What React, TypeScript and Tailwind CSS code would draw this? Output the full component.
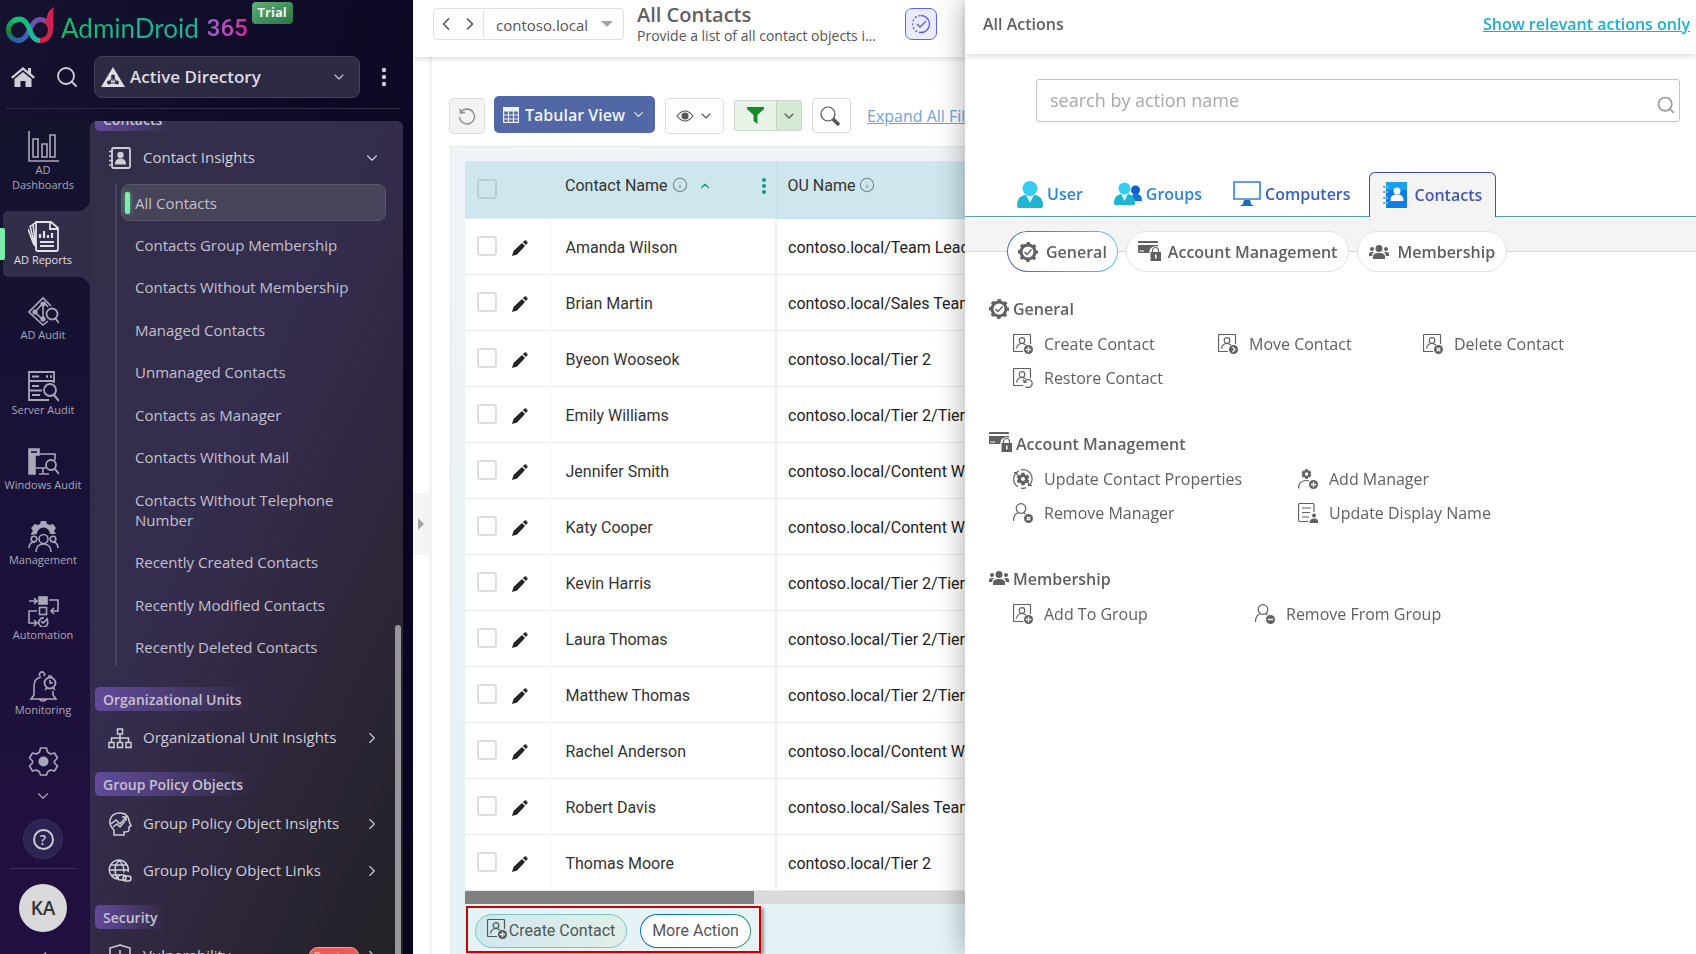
import type { ReactNode } from "react";
import { ChevronDown, ChevronLeft, ChevronRight, ChevronUp, EllipsisVertical, Info, Search } from "lucide-react";

type IconProps = { className?: string };

function Logo() {
  return (
    <svg viewBox="0 0 50 38" className="h-[38px] w-[50px]" fill="none" strokeWidth="5">
      <defs>
        <linearGradient id="ringLeft" x1="0" y1="0" x2="0" y2="1">
          <stop offset="0" stopColor="#16b868" />
          <stop offset="0.6" stopColor="#1c7f3a" />
          <stop offset="1" stopColor="#2b62ad" />
        </linearGradient>
        <linearGradient id="ringCross" x1="0" y1="1" x2="1" y2="0">
          <stop offset="0" stopColor="#2b62ad" />
          <stop offset="0.5" stopColor="#4d62b0" />
          <stop offset="1" stopColor="#7a4aa8" />
        </linearGradient>
        <linearGradient id="ringRight" x1="0" y1="0" x2="0" y2="1">
          <stop offset="0" stopColor="#7a4aa8" />
          <stop offset="0.4" stopColor="#c02a5c" />
          <stop offset="1" stopColor="#d81f3c" />
        </linearGradient>
        <linearGradient id="ringBand" x1="0" y1="0" x2="1" y2="1">
          <stop offset="0" stopColor="#16c070" />
          <stop offset="1" stopColor="#1cb8a8" />
        </linearGradient>
      </defs>
      <path d="M14 34.500A10.500 10.500 0 0 1 14 13.500" stroke="url(#ringLeft)" />
      <path d="M13.500 34.500C25 34.500 24 13.500 35.500 13.500" stroke="url(#ringCross)" />
      <path d="M35 13.500a10.500 10.500 0 0 1 0 21" stroke="url(#ringRight)" />
      <path d="M8 15C20 8 24 22 26 27c2 5 5 7.500 9 7.500" stroke="url(#ringBand)" />
      <path d="M40 17C43 13 40 6 49 1c-2 7 0 12-.5 20-.5 5-3.500 4-4.500 2-.5-2-2-4-4-6Z" fill="#d0204f" stroke="none" />
    </svg>
  );
}

function HomeIcon() {
  return (
    <svg viewBox="0 0 24 20" className="h-5 w-6" fill="currentColor">
      <path d="M12 0 0 10l1.500 1.700L12 3l10.500 8.700L24 10l-4-3.400V1h-3v3.200Z" />
      <path d="m12 5-8.500 7v8h6v-6h5v6h6v-8Z" />
    </svg>
  );
}

function DirectoryIcon() {
  return (
    <svg viewBox="0 0 24 20" className="h-5 w-6">
      <path d="M12 0 24 20H0Z" fill="#dddbe3" />
      <path d="M12 9v5m-3.500 2h7M12 10l-4 6m4-6 4 6" stroke="#322f4a" strokeWidth="1.200" />
      <circle cx="12" cy="9.500" r="2" fill="#322f4a" />
      <circle cx="8" cy="15.500" r="2" fill="#322f4a" />
      <circle cx="16" cy="15.500" r="2" fill="#322f4a" />
    </svg>
  );
}

function RailIcon({ children }: { children: ReactNode }) {
  return (
    <svg viewBox="0 0 31 31" className="h-[31px] w-[31px] shrink-0" fill="none" stroke="currentColor" strokeWidth="1.600">
      {children}
    </svg>
  );
}

const dashboardIcon = (
  <RailIcon>
    <path d="M1 0v30h30M5 8h5v18H5ZM14 13h5v13h-5ZM22 4h5v22h-5Z" />
  </RailIcon>
);
const reportsIcon = (
  <RailIcon>
    <path d="M8 1h15l7 6v21q0 2-2 2H10q-2 0-2-2ZM22 1v7h8M12 25h14M12 21h14" strokeWidth="1.800" />
    <path d="M12 17v-4M16 17v-7M20 17v-3M24 17v-5" strokeWidth="2.200" />
    <path d="m5 3 3 24M2 5l5 20M5 3l3-1M2 5l3-1M0 8l6 16" />
  </RailIcon>
);
const adAuditIcon = (
  <RailIcon>
    <path d="M23 10 15 2 1 16l14 13 5-4M15 6v19M15 7l-8 9 8 8M16 6l4 5" />
    <circle cx="24" cy="18" r="5.500" strokeWidth="1.800" />
    <path d="m27 22 4 5" strokeWidth="2" />
    <circle cx="15" cy="8" r="1.800" fill="currentColor" />
    <circle cx="7" cy="16" r="1.800" fill="currentColor" />
    <circle cx="15" cy="23" r="1.800" fill="currentColor" />
  </RailIcon>
);
const serverAuditIcon = (
  <RailIcon>
    <path d="M26 12V1H1v28h20M1 10h25M4 5.500h7M4 15h7M1 19.500h13M4 24h8" strokeWidth="1.800" />
    <path d="M18 5.500h2M22 5.500h2" strokeWidth="2.400" />
    <circle cx="22" cy="19" r="6" strokeWidth="1.800" />
    <path d="m26 24 5 6" strokeWidth="2" />
  </RailIcon>
);
const windowsAuditIcon = (
  <RailIcon>
    <path d="M1 3h10v6H7v19H1Z" fill="currentColor" />
    <path d="M3 6h6" stroke="#15122f" />
    <path d="M11 8h16v6M8 22h10M15 22v5M11 28h10" />
    <circle cx="23" cy="19" r="5" strokeWidth="1.800" />
    <path d="m27 23 4 5" strokeWidth="2" />
  </RailIcon>
);
const managementIcon = (
  <RailIcon>
    <path
      d="M3 14c0-2 1-3 2-4L3 7l4-4 3 1 2-1 1-3h5l1 3 3 1 3-1 3 4-2 3 2 3h-6a6.500 6.500 0 0 0-13 0Z"
      fill="currentColor"
      stroke="none"
    />
    <circle cx="15.500" cy="18" r="4.500" />
    <circle cx="6" cy="18" r="2.800" />
    <circle cx="25" cy="18" r="2.800" />
    <path d="M8 31c0-5 3-8 7.500-8s7.500 3 7.500 8M1 27c0-4 2-6 6-6M30 27c0-4-2-6-6-6" />
  </RailIcon>
);
const automationIcon = (
  <RailIcon>
    <rect x="11" y="1" width="8" height="7" fill="currentColor" />
    <rect x="11.500" y="11.500" width="7" height="7" />
    <path d="M1 5h7M6 2l3 3-3 3M21 4h9v11h-7M26 12l-3 3 3 3M9 15H1v12h7M6 24l3 3-3 3" />
    <path d="M19 24a4.500 4.500 0 1 1-3-2M13 25l2 2 5-5" />
  </RailIcon>
);
const monitoringIcon = (
  <RailIcon>
    <path d="M25 20v4l3 4H3l3-4V15c0-5 3-8 7-9M12 5a2.500 2.500 0 1 1 4 0M11 28q4 4 8 0" />
    <circle cx="22" cy="12" r="5.500" strokeWidth="1.800" />
    <path d="M22 9v3h3M20 5h4M17 19l2-2M27 19l-2-2" />
  </RailIcon>
);

function GearOutline() {
  return (
    <RailIcon>
      <path d="M12.500 2h6l1 4 3 2 4-1 3 5-3 3v2l3 3-3 5-4-1-3 2-1 3h-6l-1-3-3-2-4 1-3-5 3-3v-2l-3-3 3-5 4 1 3-2Z" strokeLinejoin="round" />
      <circle cx="15.500" cy="15.500" r="5" fill="currentColor" stroke="none" />
    </RailIcon>
  );
}

function ListIcon({ children }: { children: ReactNode }) {
  return (
    <svg viewBox="0 0 24 24" className="h-6 w-6 shrink-0" fill="none" stroke="currentColor" strokeWidth="1.500">
      {children}
    </svg>
  );
}

const contactInsightsIcon = (
  <ListIcon>
    <rect x="4" y="2" width="18" height="20" rx="1.500" strokeWidth="1.800" />
    <circle cx="12.500" cy="9" r="3.200" fill="currentColor" stroke="none" />
    <path d="M7 18.500c0-4 2-6 5.500-6s5.500 2 5.500 6Z" fill="currentColor" stroke="none" />
    <path d="M1 5.500h4M1 10h4M1 14.500h4M1 19h4" />
  </ListIcon>
);
const unitIcon = (
  <ListIcon>
    <path d="M9.500 3h5v5h-5ZM1 16.500h5v5H1ZM9.500 16.500h5v5h-5ZM18 16.500h5v5h-5ZM12 8v8M3.500 16v-4h17v4" />
  </ListIcon>
);
const policyInsightsIcon = (
  <ListIcon>
    <path d="M6 23v-5c-7-6-5-17 6-17 7 0 9 5 9 8l2 5-2 1v3q0 2-5 2v3ZM3 12l5-4 4 4 6-7M14 5h4v4M5 15l4-3 3 3 5-6" />
  </ListIcon>
);
const policyLinksIcon = (
  <ListIcon>
    <path d="M10 20A9.500 9.500 0 1 1 20 13M1 11h20M2.500 6h17M3 16h9M11 1.500C6 6 6 15 10 20M11 1.500c4 3 5 7 5 12" />
    <rect x="10" y="16" width="8" height="5" rx="2.500" />
    <rect x="15" y="17" width="8" height="5" rx="2.500" />
  </ListIcon>
);
const shieldIcon = (
  <ListIcon>
    <path d="m12 1 10 3v8c0 6-4 9-10 11C6 21 2 18 2 12V4ZM12 6v7" />
  </ListIcon>
);

const railItems = [
  { label: "AD Reports", icon: reportsIcon, active: true },
  { label: "AD Audit", icon: adAuditIcon },
  { label: "Server Audit", icon: serverAuditIcon },
  { label: "Windows Audit", icon: windowsAuditIcon },
  { label: "Management", icon: managementIcon },
  { label: "Automation", icon: automationIcon },
  { label: "Monitoring", icon: monitoringIcon }
];

const contactLinks = [
  "Contacts Group Membership",
  "Contacts Without Membership",
  "Managed Contacts",
  "Unmanaged Contacts",
  "Contacts as Manager",
  "Contacts Without Mail",
  "Contacts Without Telephone Number",
  "Recently Created Contacts",
  "Recently Modified Contacts",
  "Recently Deleted Contacts"
];

const contacts = [
  ["Amanda Wilson", "contoso.local/Team Leads"],
  ["Brian Martin", "contoso.local/Sales Team"],
  ["Byeon Wooseok", "contoso.local/Tier 2"],
  ["Emily Williams", "contoso.local/Tier 2/Tier 3"],
  ["Jennifer Smith", "contoso.local/Content Writers"],
  ["Katy Cooper", "contoso.local/Content Writers"],
  ["Kevin Harris", "contoso.local/Tier 2/Tier 3"],
  ["Laura Thomas", "contoso.local/Tier 2/Tier 3"],
  ["Matthew Thomas", "contoso.local/Tier 2/Tier 3"],
  ["Rachel Anderson", "contoso.local/Content Writers"],
  ["Robert Davis", "contoso.local/Sales Team"],
  ["Thomas Moore", "contoso.local/Tier 2"]
];

function SectionTag({ label }: { label: string }) {
  return (
    <h2 className="ml-[5px] flex h-6 w-fit shrink-0 items-center rounded-[5px] bg-linear-to-r from-[#634a9a] to-transparent px-2 text-[14px] font-semibold text-[#c5c1d1]">
      {label}
    </h2>
  );
}

function ListRow({ icon, label, open, badge }: { icon: ReactNode; label: string; open?: boolean; badge?: string }) {
  return (
    <button type="button" className="flex h-[47px] w-full shrink-0 items-center pr-[22px] pl-[18px] text-left text-[15px] text-[#cfcdd6]">
      {icon}
      <span className="ml-[11px] flex-1">{label}</span>
      {badge ? (
        <span className="mr-1 rounded-full border border-[#f3a49c] bg-[#ee5a58] px-1 text-[11px] leading-[15px] text-[#f7d6a8]">{badge}</span>
      ) : null}
      {open ? <ChevronDown className="h-[18px] w-[18px]" strokeWidth={1.5} /> : <ChevronRight className="h-[18px] w-[18px]" strokeWidth={1.5} />}
    </button>
  );
}

function Rail() {
  return (
    <nav aria-label="Modules" className="flex w-[90px] shrink-0 flex-col items-center text-[11px] leading-[15px] text-[#aba7ba]">
      <button type="button" className="flex h-[90px] w-full shrink-0 flex-col items-center pt-[10px] pr-1">
        {dashboardIcon}
        <span className="w-16">AD Dashboards</span>
      </button>
      {railItems.map((item) => (
        <button
          type="button"
          key={item.label}
          className={
            item.active
              ? "relative mb-[9px] ml-[3px] flex h-[66px] w-[87px] shrink-0 flex-col items-center rounded-l-[5px] bg-[#312e49] pt-[10px] pr-[7px] text-[#e2e0e8]"
              : "mb-[9px] flex h-[66px] w-full shrink-0 flex-col items-center pt-[10px] pr-1"
          }
        >
          {item.active ? (
            <>
              <span className="absolute top-[17px] -left-[3px] h-8 w-[5px] rounded-r-[2px] bg-[#7cecac]" />
              <span className="absolute -top-3 right-0 h-3 w-3 bg-[radial-gradient(circle_at_top_left,transparent_12px,#312e49_12px)]" />
              <span className="absolute right-0 -bottom-3 h-3 w-3 bg-[radial-gradient(circle_at_bottom_left,transparent_12px,#312e49_12px)]" />
            </>
          ) : null}
          {item.icon}
          <span className="whitespace-nowrap">{item.label}</span>
        </button>
      ))}
      <div className="flex w-full flex-col items-center pr-1">
        <button type="button" aria-label="Settings" className="mt-[10px]">
          <GearOutline />
        </button>
        <ChevronDown className="mt-[10px] h-[18px] w-[18px]" strokeWidth={1.5} />
        <button type="button" aria-label="Help" className="mt-[14px] flex h-10 w-10 items-center justify-center rounded-full border border-[#3a3160] bg-[#2c2450] text-[#cbc8d6]">
          <span className="flex h-[21px] w-[21px] items-center justify-center rounded-full border-2 border-current text-[14px] font-semibold">?</span>
        </button>
        <hr className="mt-[9px] w-[66px] border-[#3c315f]" />
        <button type="button" className="mt-[15px] flex h-12 w-12 items-center justify-center rounded-full bg-[#d9d8da] text-[19px] font-semibold text-[#333]">
          KA
        </button>
        <ChevronLeft className="mt-4 h-5 w-5" />
      </div>
    </nav>
  );
}

function Sidebar() {
  return (
    <aside className="flex w-[413px] shrink-0 flex-col overflow-hidden bg-[linear-gradient(105deg,#15132f_0%,#0f0c29_40%,#080420_100%)] bg-[#15132f] font-['Open_Sans',sans-serif]">
      <div className="flex h-[121px] shrink-0 flex-col">
        <div className="flex h-12 items-start pl-[5px]">
          <div className="pt-[6px]">
            <Logo />
          </div>
          <span className="ml-[6px] bg-linear-to-r from-[#17b86b] via-[#1bb593] via-70% to-[#1bb593] bg-clip-text pt-[12px] font-['Lato',sans-serif] text-[26px] leading-8 text-transparent">
            AdminDroid
          </span>
          <span className="ml-2 bg-linear-to-r from-[#9a62d0] to-[#e0189b] bg-clip-text pt-[12px] font-['Roboto',sans-serif] text-[24px] leading-8 font-medium text-transparent">
            365
          </span>
          <span className="mt-[2px] ml-1 flex h-[22px] w-[41px] items-center justify-center rounded-[4px] bg-linear-to-br from-[#5cb176] to-[#2a7444] text-[13px] font-bold text-[#f0f5f1]">
            Trial
          </span>
        </div>
        <div className="flex items-center pt-2 pl-[11px] text-[#cfcdd6]">
          <button type="button" aria-label="Home">
            <HomeIcon />
          </button>
          <button type="button" aria-label="Search" className="ml-5">
            <Search className="h-6 w-6" strokeWidth={1.8} />
          </button>
          <div className="ml-[15px] flex h-[42px] w-[266px] items-center rounded-[8px] border border-[#45415c] bg-[#2d2a44] pr-3 pl-[6px]">
            <DirectoryIcon />
            <select aria-label="Directory" className="ml-[5px] flex-1 appearance-none bg-transparent text-[17px] font-semibold text-[#dddbe3]">
              <option>Active Directory</option>
            </select>
            <ChevronDown className="h-4 w-4" strokeWidth={1.6} />
          </div>
          <button type="button" aria-label="More" className="ml-[12px]">
            <EllipsisVertical className="h-6 w-6" strokeWidth={2.4} />
          </button>
        </div>
        <hr className="mt-[10px] ml-[6px] w-[394px] border-[#2e2b45]" />
      </div>

      <div className="flex min-h-0 flex-1 bg-[linear-gradient(180deg,#13132e_0%,#1a1138_50%,#220f42_100%)]">
        <Rail />
        <div className="flex min-w-0 flex-1 bg-[#0a0621]">
          <div className="relative flex w-[313px] flex-col overflow-hidden rounded-t-[6px] bg-[linear-gradient(115deg,#312f4a_0%,#352c4d_45%,#2d2638_72%,#232126_100%)]">
            <div className="-mt-[14px] flex flex-col gap-[3px]">
              <SectionTag label="Contacts" />
              <ListRow icon={contactInsightsIcon} label="Contact Insights" open />
            </div>
            <ul className="mt-[3px] mr-[17px] ml-[25px] flex h-[482px] shrink-0 flex-col justify-between border-l-2 border-[#48435a] pl-1 text-[15px] leading-5 text-[#c3c0cc]">
              <li>
                <a href="#all" className="flex h-[37px] items-center rounded-[8px] border border-[#5a566b] bg-[#474359] pl-[3px]">
                  <span className="mr-[5px] h-[22px] w-[5px] rounded-[2px] bg-[#7cecac] shadow-[0_0_5px_#4fae82]" />
                  All Contacts
                </a>
              </li>
              {contactLinks.map((label) => (
                <li key={label} className="flex items-center py-[9px] pr-8 pl-[14px]">
                  <a href="#report">{label}</a>
                </li>
              ))}
            </ul>
            <div className="mt-[21px] flex flex-col">
              <SectionTag label="Organizational Units" />
              <div className="mt-[3px] mb-[11px]">
                <ListRow icon={unitIcon} label="Organizational Unit Insights" />
              </div>
              <SectionTag label="Group Policy Objects" />
              <div className="mt-1 mb-[11px]">
                <ListRow icon={policyInsightsIcon} label="Group Policy Object Insights" />
                <ListRow icon={policyLinksIcon} label="Group Policy Object Links" />
              </div>
              <SectionTag label="Security" />
              <div className="mt-[3px]">
                <ListRow icon={shieldIcon} label="Vulnerability" badge="Preview" />
              </div>
            </div>
            <span className="absolute top-[504px] right-[2px] bottom-0 w-[6px] rounded-t-full bg-[#98959d]" />
          </div>
        </div>
      </div>
    </aside>
  );
}

function PencilIcon() {
  return (
    <svg viewBox="0 0 16 16" className="h-4 w-4" fill="#222">
      <path d="M0 16 1.500 11 10 3 13 6 5 14.500ZM11 2 12.200.8q1-.8 2-.1l1 1q.8 1 0 2L14 5Z" />
    </svg>
  );
}

function MainArea() {
  return (
    <main className="flex min-w-0 flex-1 flex-col overflow-hidden bg-white font-['Open_Sans',sans-serif] text-[#555]">
      <header className="z-10 flex h-[57px] shrink-0 items-start pt-2 pl-5 shadow-[0_2px_6px_rgba(0,0,0,0.14)]">
        <div className="flex h-8 shrink-0 items-center rounded-[4px] border border-[#e0e0e0]">
          <button type="button" aria-label="Back" className="pl-[2px]">
            <ChevronLeft className="h-5 w-5" />
          </button>
          <button type="button" aria-label="Forward" className="ml-1 pr-[3px]">
            <ChevronRight className="h-5 w-5" />
          </button>
          <div className="flex h-full w-[140px] items-center rounded-l-[4px] border-l border-[#e0e0e0] pr-[10px] pl-3">
            <select aria-label="Domain" className="min-w-0 flex-1 appearance-none bg-transparent pt-[2px] text-[15px] font-medium">
              <option>contoso.local</option>
            </select>
            <span className="h-0 w-0 border-x-[6px] border-t-[6px] border-x-transparent border-t-[#a3a3a3]" />
          </div>
        </div>
        <div className="-mt-1 ml-[13px] w-[243px]">
          <h1 className="text-[20px] leading-[22px] font-semibold text-[#606060]">All Contacts</h1>
          <p className="truncate text-[14px] leading-5 font-medium">Provide a list of all contact objects in the domain</p>
        </div>
        <button type="button" aria-label="Tasks" className="ml-[25px] flex h-8 w-8 items-center justify-center rounded-[7px] border border-[#6264ec] bg-[#ecebfd]">
          <svg viewBox="0 0 20 20" className="h-5 w-5" fill="none" stroke="#5a5ce0" strokeWidth="1.300">
            <path d="M10 1.500a8.500 8.500 0 0 1 0 17" />
            <path d="M10 18.500a8.500 8.500 0 0 1 0-17" strokeDasharray="2 2" />
            <path d="m6 10 3 3 6-6" />
          </svg>
        </button>
      </header>

      <div className="flex min-h-0 flex-1">
        <div className="flex w-4 shrink-0 items-center pt-9">
          <button type="button" aria-label="Expand panel" className="flex h-[62px] w-full items-center justify-center rounded-r-[4px] bg-[#f4f4f4]">
            <span className="h-0 w-0 border-y-[6px] border-l-[6px] border-y-transparent border-l-[#a5a5a5]" />
          </button>
        </div>
        <div className="flex min-w-0 flex-1 flex-col border-l-[3px] border-[#f3f3f3]">
          <div className="flex h-[89px] shrink-0 items-end pl-[17px]">
            <div className="flex h-[50px] items-start whitespace-nowrap">
              <button type="button" aria-label="Refresh" className="mt-[2px] flex h-9 w-9 items-center justify-center rounded-[5px] border border-[#dcdcdc] bg-[#f3f3f3]">
                <svg viewBox="0 0 18 18" className="h-[18px] w-[18px]" fill="none" stroke="#8b8b8b" strokeWidth="1.300">
                  <path d="M3 5a7.500 7.500 0 1 1-1.500 5M2 1.500 2.500 6 7 5.500" />
                </svg>
              </button>
              <button type="button" className="ml-[9px] flex h-[37px] w-[161px] items-center rounded-[5px] bg-[#5267a5] pl-[9px] text-[16px] font-semibold text-[#f0f2f8]">
                <svg viewBox="0 0 16 16" className="h-4 w-4" fill="none" stroke="currentColor" strokeWidth="1.200">
                  <path d="M.6.600h14.800v14.800H.600ZM.6 8h15M.6 12h15M5.500 4v11M10.500 4v11" />
                  <path d="M0 2.500h16" strokeWidth="4" />
                </svg>
                <span className="ml-[6px]">Tabular View</span>
                <ChevronDown className="ml-[6px] h-[15px] w-[15px]" strokeWidth={1.8} />
              </button>
              <button type="button" aria-label="Columns" className="mt-[2px] ml-[10px] flex h-[36px] w-[59px] items-center justify-center gap-1 rounded-[4px] border border-[#e0e0e0]">
                <svg viewBox="0 0 18 12" className="h-3 w-[18px]" fill="none" stroke="#555" strokeWidth="1.200">
                  <path d="M1 6q8-10 16 0-8 10-16 0Z" />
                  <circle cx="9" cy="6" r="3" fill="#555" />
                </svg>
                <ChevronDown className="h-4 w-4" strokeWidth={1.6} />
              </button>
              <div className="mt-1 ml-[10px] flex h-[31px] overflow-hidden rounded-[2px] border border-[#cfd8cf]">
                <button type="button" aria-label="Filter" className="flex w-[42px] items-center justify-center border-r border-[#c4cfc4] bg-[#e8f3e8]">
                  <svg viewBox="0 0 17 17" className="h-[17px] w-[17px]" fill="#178a2c">
                    <path d="M0 0h17v2l-6.500 6v9l-4-3V8L0 2Z" />
                  </svg>
                </button>
                <button type="button" aria-label="Filter options" className="flex w-[24px] items-center justify-center bg-[#d3e9d3]">
                  <ChevronDown className="h-4 w-4" strokeWidth={1.6} />
                </button>
              </div>
              <button type="button" aria-label="Search rows" className="mt-[2px] ml-[10px] flex h-[35px] w-[39px] items-center justify-center rounded-[4px] border border-[#d8d8d8] pr-1">
                <svg viewBox="0 0 20 20" className="h-5 w-5" fill="none" stroke="#555">
                  <circle cx="8" cy="8" r="7" strokeWidth="1.200" />
                  <path d="m13 13 6 6" strokeWidth="3.500" />
                </svg>
              </button>
              <a href="#filters" className="mt-2 ml-[16px] text-[16px] leading-6 text-[#6ea5dc] underline">
                Expand All Filters
              </a>
            </div>
          </div>

          <div className="ml-[18px] flex min-h-0 flex-1 flex-col border-t border-l border-[#e4e9ec] bg-[linear-gradient(180deg,#eff4f7_0%,#e5f2f6_100%)] pt-[14px] pl-[14px] font-['Roboto',sans-serif] text-[#333]">
            <table className="w-full shrink-0 table-fixed border-collapse text-left text-[16px]">
              <thead>
                <tr className="h-[57px] bg-[#cee7ee]">
                  <th className="w-[86px] border-b border-[#e6edef] pl-3 font-normal">
                    <input type="checkbox" aria-label="Select all" className="block h-5 w-5 appearance-none rounded-[3px] border-2 border-[#b9cfd6]" />
                  </th>
                  <th className="w-[225px] border-b border-[#e6edef] pb-[6px] pl-[14px] font-normal">
                    <div className="flex items-center">
                      Contact Name
                      <Info className="mb-[2px] ml-1 h-4 w-4 text-[#6f8791]" strokeWidth={1.6} />
                      <ChevronUp className="ml-[10px] h-[14px] w-[14px] text-[#109a86]" />
                      <span className="mr-[10px] ml-auto flex flex-col gap-[2px]">
                        <i className="h-1 w-1 rounded-full bg-[#109a86]" />
                        <i className="h-1 w-1 rounded-full bg-[#109a86]" />
                        <i className="h-1 w-1 rounded-full bg-[#109a86]" />
                      </span>
                    </div>
                  </th>
                  <th className="border-b border-l border-[#c3dde4] pb-[6px] pl-[11px] font-normal">
                    <div className="flex items-center">
                      OU Name
                      <Info className="mb-[2px] ml-1 h-4 w-4 text-[#6f8791]" strokeWidth={1.6} />
                    </div>
                  </th>
                </tr>
              </thead>
              <tbody className="bg-white">
                {contacts.map(([name, unit]) => (
                  <tr key={name} className="h-14 border-b border-[#e8e8e8]">
                    <td className="pl-3">
                      <div className="flex items-center gap-[15px]">
                        <input type="checkbox" aria-label={`Select ${name}`} className="h-5 w-5 appearance-none rounded-[3px] border-2 border-[#dcdcdc]" />
                        <button type="button" aria-label={`Edit ${name}`} className="pt-[3px]">
                          <PencilIcon />
                        </button>
                      </div>
                    </td>
                    <td className="border-l border-[#f8f8f8] pt-[3px] pl-[14px]">{name}</td>
                    <td className="border-l-2 border-[#f0f0f0] pt-[3px] pl-[11px] whitespace-nowrap text-[#222]">{unit}</td>
                  </tr>
                ))}
              </tbody>
            </table>
            <div className="h-[13px] shrink-0 bg-[#dadada]">
              <div className="h-full w-[289px] bg-[#808080]" />
            </div>
            <div className="mt-[2px] ml-[1px] flex h-[47px] w-[295px] shrink-0 items-center gap-[13px] border-2 border-[#c40000] pt-1 pl-[7px] text-[16px] text-[#555] shadow-[3px_2px_3px_rgba(0,0,0,0.35)]">
              <button type="button" className="flex h-[34px] w-[152px] items-center justify-center gap-[2px] rounded-full border border-[#7cc4c4] bg-linear-to-r from-[#cfe7ef] to-[#e0f0e6]">
                <span className="pb-1">
                  <PersonCard badge="plus" />
                </span>
                Create Contact
              </button>
              <button type="button" className="h-[34px] w-[111px] rounded-full bg-linear-to-r from-[#1268d8] to-[#2a9a5e] p-px">
                <span className="flex h-full items-center justify-center rounded-full bg-white">More Action</span>
              </button>
            </div>
          </div>
        </div>
      </div>
    </main>
  );
}

type Badge = "plus" | "move" | "delete" | "restore" | "minus";

function BadgeMark({ badge }: { badge: Badge }) {
  if (badge === "restore") {
    return <path d="M11.500 14a4 4 0 1 1 1 4.500M10.500 11.500l.7 3 3-.5" />;
  }
  return (
    <>
      <circle cx="15.500" cy="15.500" r="4.500" fill="currentColor" stroke="none" />
      {badge === "plus" && <path d="M15.500 12.800v5.400M12.800 15.500h5.400" stroke="#fff" strokeWidth="1.300" />}
      {badge === "minus" && <path d="M12.800 15.500h5.400" stroke="#fff" strokeWidth="1.500" />}
      {badge === "delete" && <path d="m13.700 13.700 3.600 3.600m0-3.600-3.600 3.600" stroke="#fff" strokeWidth="1.300" />}
      {badge === "move" && <path d="m14.500 13 2.500 2.500-2.500 2.500" stroke="#fff" strokeWidth="1.300" />}
    </>
  );
}

function SmallIcon({ children }: { children: ReactNode }) {
  return (
    <svg viewBox="0 0 20 20" className="h-5 w-5 shrink-0" fill="none" stroke="currentColor" strokeWidth="1.200">
      {children}
    </svg>
  );
}

function PersonCard({ badge }: { badge: Badge }) {
  return (
    <SmallIcon>
      <path d="M10 17.500H1.500Q.5 17.500.5 16.500V1.500Q.5.500 1.500.500h15q1 0 1 1V10" />
      <circle cx="9" cy="6.500" r="2.800" />
      <path d="M3.500 14.500c.5-3 2-5 5.500-5 2 0 3 .7 4 1.700" />
      <BadgeMark badge={badge} />
    </SmallIcon>
  );
}

function Person({ badge }: { badge: Badge }) {
  return (
    <SmallIcon>
      <circle cx="8" cy="5.500" r="4.800" />
      <path d="M.5 18c0-5 2-7.500 5-8.500M10.500 9.500l2 1.500" />
      <BadgeMark badge={badge} />
    </SmallIcon>
  );
}

const cog = "M8.700 4h2.600l.4 1.700 1.300.8 1.700-.5 1.300 2.200-1.200 1.300v1l1.200 1.300-1.300 2.200-1.700-.5-1.300.8-.4 1.700H8.700l-.4-1.700-1.300-.8-1.700.5L4 11.800l1.200-1.300v-1L4 8.200 5.300 6l1.700.5 1.300-.8Z";

const updatePropertiesIcon = (
  <SmallIcon>
    <path d={cog} fill="currentColor" stroke="currentColor" strokeWidth=".6" />
    <circle cx="10" cy="10" r="2" fill="#fff" stroke="none" />
    <path d="M6 1.700A9.200 9.200 0 0 0 5 17.800M8 .8a9.300 9.300 0 0 1 8 16M1 3.500h3v3M19 16.500h-3.500v-3M8 19.200q3 .4 5-.6" />
  </SmallIcon>
);
const addManagerIcon = (
  <SmallIcon>
    <g transform="translate(1.500 -2) scale(.7)">
      <path d={cog} fill="currentColor" stroke="currentColor" strokeWidth="1.500" />
      <circle cx="10" cy="10" r="2.500" fill="#fff" stroke="none" />
    </g>
    <path d="M.5 19.500c0-5 3-8 8-8 1.500 0 2 .2 2.500.5" />
    <BadgeMark badge="plus" />
  </SmallIcon>
);
const displayNameIcon = (
  <SmallIcon>
    <path d="M10 18.500H2Q.5 18.500.5 17V2Q.5.500 2 .500h12.500q1.500 0 1.500 1.500v7M4 5h9M4 9.500h8M4 14h7" />
    <circle cx="16" cy="12.500" r="2" fill="currentColor" stroke="none" />
    <path d="M11.500 20c0-3 1.500-4.500 4.500-4.500s4.500 1.500 4.500 4.500Z" fill="currentColor" stroke="none" />
  </SmallIcon>
);

function GeneralIcon({ className = "" }: IconProps) {
  return (
    <svg viewBox="0 0 20 20" className={`h-5 w-5 shrink-0 ${className}`.trim()} fill="none">
      <circle cx="10" cy="10" r="7" stroke="currentColor" strokeWidth="3" />
      <circle cx="10" cy="10" r="9" stroke="currentColor" strokeWidth="2" strokeDasharray="3.500 3.568" strokeDashoffset="1.700" />
      <path d="m6.500 10 2.500 2.500 4.500-5" stroke="currentColor" strokeWidth="1.500" />
    </svg>
  );
}

function AccountIcon({ className = "" }: IconProps) {
  return (
    <svg viewBox="0 0 23 20" className={`h-5 w-[23px] shrink-0 ${className}`.trim()} fill="currentColor">
      <path d="M0 1Q0 0 1 0h18q1 0 1 1v1H0ZM0 4h20v1.500c-5-1-8 1.500-8.500 4.500v2H1q-1 0-1-1Z" />
      <path d="M1.500 9.500H6v1H1.500Z" fill="#fff" />
      <path d="M12.500 11H23v9H12.500Z" />
      <path d="M14.500 11V9.500a3 3 0 0 1 6 0V11" fill="none" stroke="currentColor" strokeWidth="1.200" />
      <path d="M17 13.500h1.500v4H17Z" fill="#fff" />
    </svg>
  );
}

function MembersIcon({ className = "" }: IconProps) {
  return (
    <svg viewBox="0 0 20 14" className={`h-[14px] w-5 shrink-0 ${className}`.trim()} fill="currentColor">
      <circle cx="10" cy="3.500" r="3.500" />
      <circle cx="3" cy="4" r="2" />
      <circle cx="17" cy="4" r="2" />
      <path d="M4 14v-2c0-3 2-4 6-4s6 1 6 4v2ZM0 11V9q0-2 3-2h2Q3 8.500 3 11ZM20 11V9q0-2-3-2h-2q2 1.500 2 4Z" />
    </svg>
  );
}

function UserTabIcon() {
  return (
    <svg viewBox="0 0 26 27" className="h-[27px] w-[26px]">
      <path d="M0 25c0-7 3-10 8-11h10c5 1 8 4 8 11q0 2-2 2H2q-2 0-2-2Z" fill="#1fb4d2" />
      <path d="m9 14 4 8 4-8Z" fill="#d9f4fb" />
      <circle cx="13" cy="7.500" r="7.500" fill="#34cdf0" />
    </svg>
  );
}

function GroupsTabIcon() {
  return (
    <svg viewBox="0 0 28 24" className="h-6 w-7">
      <path d="M16 19c0-5 2-7 6-7s6 2 6 7Z" fill="#1173dc" />
      <circle cx="21.500" cy="8" r="4.500" fill="#0c5fd0" />
      <path d="M0 22c0-6 2-9 7-10h7c5 1 7 4 7 10q0 1-2 1H2q-2 0-2-1Z" fill="#1fb4d2" />
      <path d="m7 12 3.500 7 3.500-7Z" fill="#d9f4fb" />
      <circle cx="10.500" cy="6.500" r="6" fill="#34cdf0" />
    </svg>
  );
}

function ComputerTabIcon() {
  return (
    <svg viewBox="0 0 28 26" className="h-[26px] w-7" fill="none">
      <path d="M1 1h26v17H1Z" stroke="#2a83dd" strokeWidth="1.600" />
      <path d="M11 19h6l1 4 3 2H7l3-2Z" fill="#1f6fb5" />
    </svg>
  );
}

function ContactsTabIcon() {
  return (
    <svg viewBox="0 0 24 26" className="h-[26px] w-6">
      <path d="M3 0h21v26H3Z" fill="#0f7ee0" />
      <path d="M3 0h21v8H3Z" fill="#15a2ee" />
      <path d="M0 5h5M0 10h5M0 16h5M0 21h5" stroke="#6cb8f0" strokeWidth="2" />
      <circle cx="14" cy="9" r="3.500" fill="#fff" />
      <path d="M7.500 19c0-5 2-6.500 6.500-6.500s6.500 1.500 6.500 6.500Z" fill="#fff" />
    </svg>
  );
}

function ActionItem({ icon, label }: { icon: ReactNode; label: string }) {
  return (
    <button type="button" className="flex h-[34px] items-center gap-[11px] text-left whitespace-nowrap">
      {icon}
      {label}
    </button>
  );
}

function ActionSection({ icon, title, columns, children }: { icon: ReactNode; title: string; columns: string; children: ReactNode }) {
  return (
    <section className="mb-[37px]">
      <h3 className="mb-[6px] flex h-6 items-center gap-1 font-semibold">
        {icon}
        {title}
      </h3>
      <div className={`grid pl-6 ${columns}`}>{children}</div>
    </section>
  );
}

function ActionsDrawer() {
  return (
    <aside className="fixed inset-y-0 right-0 z-20 w-[731px] bg-white font-['Open_Sans',sans-serif] text-[16px] text-[#5f6062] shadow-[-2px_0_26px_rgba(0,0,0,0.3)]">
      <header className="flex h-[54px] items-center justify-between pr-[6px] pb-[6px] pl-[18px] shadow-[0_2px_6px_rgba(0,0,0,0.14)]">
        <h2 className="font-semibold">All Actions</h2>
        <a href="#relevant" className="font-semibold text-[#1ab0d5] underline">
          Show relevant actions only
        </a>
      </header>

      <div className="mt-[25px] mr-4 ml-[71px] flex h-[43px] items-center rounded-[3px] border border-[#c4c4c4] pr-[3px] pl-[13px]">
        <input type="search" aria-label="Search actions" placeholder="search by action name" className="flex-1 bg-transparent text-[18px] outline-none placeholder:text-[#a8a8a8]" />
        <Search className="mt-2 h-5 w-5 text-[#9a9a9a]" />
      </div>

      <nav aria-label="Object types" className="mt-[50px] flex h-[45px] items-stretch border-b border-[#5b9cd0] font-semibold">
        <a href="#user" className="ml-[52px] flex items-center gap-1 text-[#2a86d8]">
          <UserTabIcon />
          User
        </a>
        <a href="#groups" className="ml-[31px] flex items-center gap-1 text-[#2a86d8]">
          <GroupsTabIcon />
          Groups
        </a>
        <a href="#computers" className="ml-[31px] flex items-center gap-1 text-[#3a5fc2]">
          <ComputerTabIcon />
          Computers
        </a>
        <a href="#contacts" className="-mb-px ml-[18px] flex items-center gap-2 rounded-t-[6px] border border-b-0 border-[#3c50ae] bg-[#f4f4f4] px-[13px] text-[#4557b2]">
          <ContactsTabIcon />
          Contacts
        </a>
      </nav>

      <div className="flex h-[55px] items-end gap-2 bg-[linear-gradient(#f4f4f4_34px,#d8d8d8_34px,#d8d8d8_35px,#fff_35px)] pl-[42px] font-semibold">
        <button type="button" className="h-[41px] rounded-full bg-linear-to-r from-[#4a64b4] to-[#6cc0e6] p-px">
          <span className="flex h-full items-center gap-2 rounded-full bg-white px-[10px]">
            <GeneralIcon />
            General
          </span>
        </button>
        <button type="button" className="flex h-[41px] items-center gap-[7px] rounded-full border border-[#e2e2e2] bg-white px-[11px]">
          <AccountIcon className="mb-[2px]" />
          Account Management
        </button>
        <button type="button" className="flex h-[41px] items-center gap-2 rounded-full border border-[#e2e2e2] bg-white px-[11px]">
          <MembersIcon />
          Membership
        </button>
      </div>

      <div className="pt-[25px] pl-6">
        <ActionSection icon={<GeneralIcon />} title="General" columns="grid-cols-[205px_205px_1fr]">
          <ActionItem icon={<PersonCard badge="plus" />} label="Create Contact" />
          <ActionItem icon={<PersonCard badge="move" />} label="Move Contact" />
          <ActionItem icon={<PersonCard badge="delete" />} label="Delete Contact" />
          <ActionItem icon={<PersonCard badge="restore" />} label="Restore Contact" />
        </ActionSection>
        <ActionSection icon={<AccountIcon className="mb-1" />} title="Account Management" columns="grid-cols-[285px_1fr]">
          <ActionItem icon={updatePropertiesIcon} label="Update Contact Properties" />
          <ActionItem icon={addManagerIcon} label="Add Manager" />
          <ActionItem icon={<Person badge="delete" />} label="Remove Manager" />
          <ActionItem icon={displayNameIcon} label="Update Display Name" />
        </ActionSection>
        <ActionSection icon={<MembersIcon className="mb-[2px]" />} title="Membership" columns="grid-cols-[242px_1fr]">
          <ActionItem icon={<PersonCard badge="plus" />} label="Add To Group" />
          <ActionItem icon={<Person badge="minus" />} label="Remove From Group" />
        </ActionSection>
      </div>
    </aside>
  );
}

export default function App() {
  return (
    <div className="flex h-screen overflow-hidden">
      <Sidebar />
      <MainArea />
      <ActionsDrawer />
    </div>
  );
}
